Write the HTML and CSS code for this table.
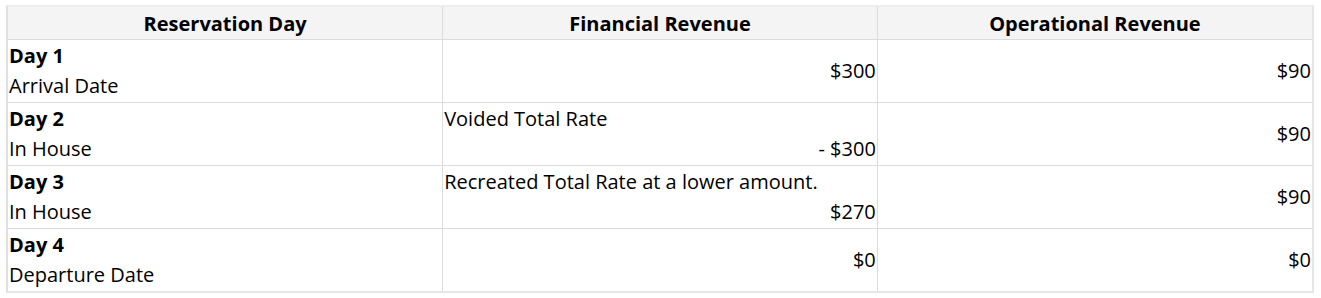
FILE: index.html
```html
<!DOCTYPE html>
<html>
<head>
<meta charset="utf-8">
<link rel="stylesheet" href="styles.css">
</head>
<body>
<div class="card">
<table class="rev">
  <thead>
    <tr>
      <th>Reservation Day</th>
      <th>Financial Revenue</th>
      <th>Operational Revenue</th>
    </tr>
  </thead>
  <tbody>
    <tr>
      <td><div class="day">Day 1</div><div>Arrival Date</div></td>
      <td class="num">$300</td>
      <td class="num">$90</td>
    </tr>
    <tr>
      <td><div class="day">Day 2</div><div>In House</div></td>
      <td><div>Voided Total Rate</div><div class="right">- $300</div></td>
      <td class="num">$90</td>
    </tr>
    <tr>
      <td><div class="day">Day 3</div><div>In House</div></td>
      <td><div>Recreated Total Rate at a lower amount.</div><div class="right">$270</div></td>
      <td class="num">$90</td>
    </tr>
    <tr>
      <td><div class="day">Day 4</div><div>Departure Date</div></td>
      <td class="num">$0</td>
      <td class="num">$0</td>
    </tr>
  </tbody>
</table>
</div>
</body>
</html>
```
FILE: styles.css
```css
html, body {
  background: #ffffff;
}
body {
  margin: 5px 7px 0 6px;
  font-family: "Open Sans", "Noto Sans", sans-serif;
  font-size: 20px;
  color: #000;
}
.card {
  background: #fff;
  border: 2px solid #e6e6e6;
  border-top-color: #ededed;
  border-left-color: #e0e0e0;
  box-shadow: 0 0 6px rgba(0, 0, 0, 0.3);
}
.rev {
  width: 100%;
  border-collapse: collapse;
  table-layout: fixed;
  background: #fff;
}
.rev th {
  background: #f4f4f4;
  font-weight: 700;
  text-align: center;
  line-height: 30px;
  padding: 2px 1px 0;
  border-bottom: 1px solid #dcdcdc;
  border-left: 1px solid #dcdcdc;
}
.rev td {
  line-height: 30px;
  padding: 1px;
  height: 62px;
  box-sizing: border-box;
  vertical-align: middle;
  border-top: 1px solid #dcdcdc;
  border-left: 1px solid #dcdcdc;
}
.rev tr > :first-child {
  border-left: none;
}
.rev thead + tbody tr:first-child td {
  border-top: none;
}
.day {
  font-weight: 700;
}
.num, .right {
  text-align: right;
}
```
